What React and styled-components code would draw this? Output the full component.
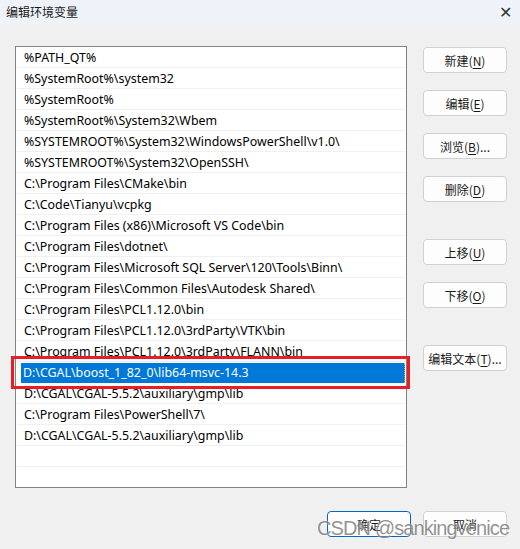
import React from "react";
import styled, { createGlobalStyle } from "styled-components";

const Global = createGlobalStyle`
  html, body { margin: 0; padding: 0; background: #f0f0f0; }
  body { font-family: "Noto Sans", "Noto Sans CJK SC", sans-serif; }
`;

const Window = styled.div`
  position: relative;
  width: 520px;
  height: 549px;
  background: #f0f0f0;
  overflow: hidden;
`;

const TitleBar = styled.div`
  height: 24px;
  background: #eef3f9;
  display: flex;
  align-items: center;
  justify-content: space-between;
  padding: 0 8px 0 6px;
  font-size: 12px;
  color: #1a1a1a;
`;

const Close = styled.span`
  font-size: 16px;
  font-weight: 300;
  color: #333;
  line-height: 1;
`;

const Body = styled.div`
  display: grid;
  grid-template-columns: 392px 84px;
  column-gap: 16px;
  padding: 22px 13px 0 15px;
`;

const List = styled.div`
  height: 440px;
  border: 1px solid #838387;
  background: #fff;
  padding: 0 1px;
  overflow: hidden;
`;

const Row = styled.div`
  height: 20px;
  border-bottom: 1px solid #f0f0f0;
  display: flex;
  align-items: center;
  padding-left: 7px;
  font-size: 12.4px;
  color: #000;
  white-space: nowrap;
`;

const EditRow = styled.div`
  height: 21px;
  display: flex;
  align-items: center;
  padding-left: 4px;
`;

const Selected = styled.div`
  flex: 1;
  height: 20px;
  background: #0078d7;
  color: #fff;
  font-size: 12.4px;
  display: flex;
  align-items: center;
  padding-left: 2px;
  border-right: 1px dotted #e8a33c;
  white-space: nowrap;
`;

const Side = styled.div`
  display: flex;
  flex-direction: column;
  gap: 17px;
  padding-top: 1px;
`;

const Button = styled.button`
  width: 84px;
  height: 26px;
  margin-top: ${(p) => (p.spaced ? "20px" : "0")};
  border: 1px solid ${(p) => (p.primary ? "#0067c0" : "#d0d0d0")};
  border-radius: 4px;
  background: #fdfdfd;
  font-family: "Noto Sans CJK SC", sans-serif;
  font-size: 12px;
  color: #1a1a1a;
  padding: 0;
  display: flex;
  align-items: center;
  justify-content: center;
  u { text-decoration: underline; text-underline-offset: 2px; }
`;

const Footer = styled.div`
  display: flex;
  justify-content: flex-end;
  gap: 12px;
  padding: 23px 13px 0 0;
`;

const Highlight = styled.div`
  position: absolute;
  left: 11px;
  top: 356px;
  width: 393px;
  height: 27px;
  border: 3px solid #e81d25;
`;

const Watermark = styled.div`
  position: absolute;
  left: 317px;
  top: 517px;
  font-family: "Liberation Sans", Arial, sans-serif;
  font-size: 20px;
  letter-spacing: -0.9px;
  color: rgba(110, 110, 110, 0.75);
  text-shadow: 0 0 2px rgba(255, 255, 255, 0.8);
  white-space: nowrap;
  pointer-events: none;
`;

const paths = [
  "%PATH_QT%",
  "%SystemRoot%\\system32",
  "%SystemRoot%",
  "%SystemRoot%\\System32\\Wbem",
  "%SYSTEMROOT%\\System32\\WindowsPowerShell\\v1.0\\",
  "%SYSTEMROOT%\\System32\\OpenSSH\\",
  "C:\\Program Files\\CMake\\bin",
  "C:\\Code\\Tianyu\\vcpkg",
  "C:\\Program Files (x86)\\Microsoft VS Code\\bin",
  "C:\\Program Files\\dotnet\\",
  "C:\\Program Files\\Microsoft SQL Server\\120\\Tools\\Binn\\",
  "C:\\Program Files\\Common Files\\Autodesk Shared\\",
  "C:\\Program Files\\PCL1.12.0\\bin",
  "C:\\Program Files\\PCL1.12.0\\3rdParty\\VTK\\bin",
  "C:\\Program Files\\PCL1.12.0\\3rdParty\\FLANN\\bin",
  "D:\\CGAL\\boost_1_82_0\\lib64-msvc-14.3",
  "D:\\CGAL\\CGAL-5.5.2\\auxiliary\\gmp\\lib",
  "C:\\Program Files\\PowerShell\\7\\",
  "D:\\CGAL\\CGAL-5.5.2\\auxiliary\\gmp\\lib",
  "",
  "",
];

const selectedIndex = 15;

const App = () => (
  <Window>
    <Global />
    <TitleBar>
      <span>编辑环境变量</span>
      <Close>✕</Close>
    </TitleBar>
    <Body>
      <List>
        {paths.map((p, i) =>
          i === selectedIndex ? (
            <EditRow key={i}>
              <Selected>{p}</Selected>
            </EditRow>
          ) : (
            <Row key={i}>{p}</Row>
          )
        )}
      </List>
      <Side>
        <Button>新建(<u>N</u>)</Button>
        <Button>编辑(<u>E</u>)</Button>
        <Button>浏览(<u>B</u>)...</Button>
        <Button>删除(<u>D</u>)</Button>
        <Button spaced>上移(<u>U</u>)</Button>
        <Button>下移(<u>O</u>)</Button>
        <Button spaced>编辑文本(<u>T</u>)...</Button>
      </Side>
    </Body>
    <Footer>
      <Button primary>确定</Button>
      <Button>取消</Button>
    </Footer>
    <Highlight />
    <Watermark>CSDN @sankingvenice</Watermark>
  </Window>
);

export default App;
